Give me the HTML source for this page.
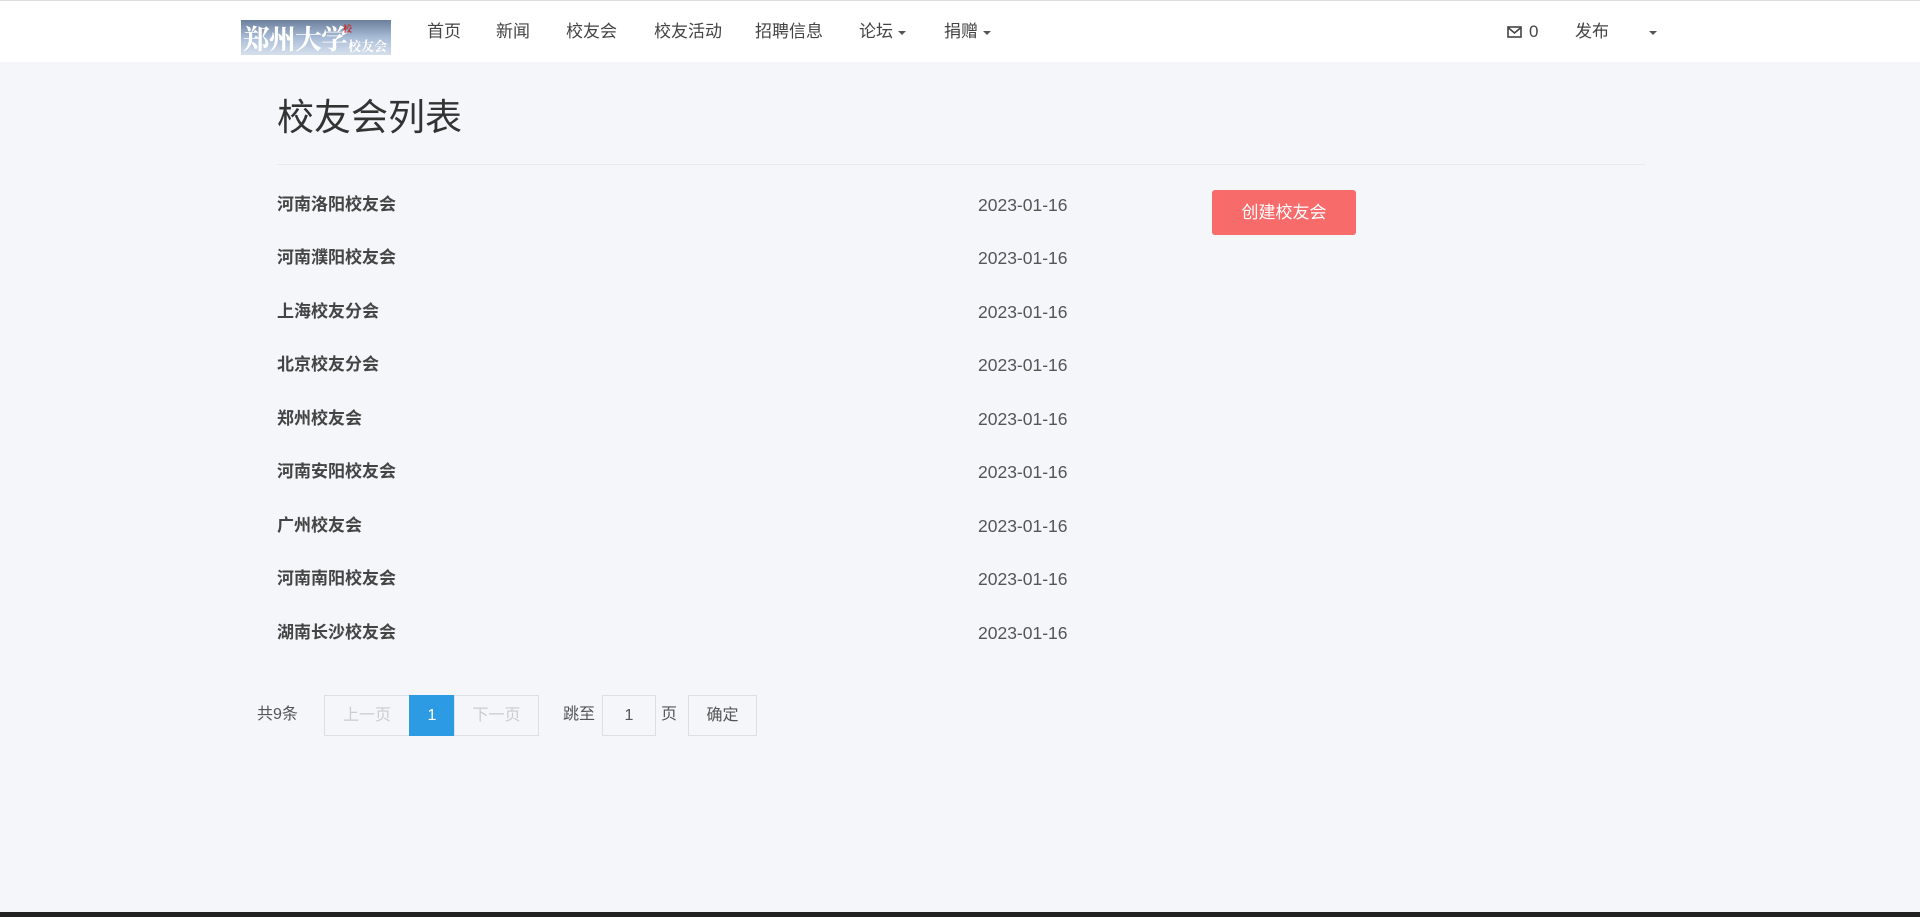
<!DOCTYPE html>
<html><head><meta charset="utf-8"><style>
*{margin:0;padding:0;box-sizing:border-box}
body{width:1920px;height:917px;background:#f4f6f9;font-family:"Liberation Sans","Noto Sans CJK SC",sans-serif;color:#333;position:relative;overflow:hidden}
.nav{position:absolute;left:0;top:0;width:1920px;height:62px;background:#fff;border-top:1px solid #ddd}
.logo{position:absolute;left:241px;top:19px;width:150px;height:35px;background:linear-gradient(180deg,#6b7f9c 0%,#a9bcd6 50%,#d6e0ec 100%);overflow:hidden}
.logo span{position:absolute;font-family:"Noto Serif CJK SC",serif;color:#fff;font-weight:bold}
.n{position:absolute;top:21px;font-size:17px;color:#444;line-height:20px}
.caret{display:inline-block;width:0;height:0;border-left:4px solid transparent;border-right:4px solid transparent;border-top:4px solid #555;vertical-align:middle;margin-left:5px}
h1{position:absolute;left:277px;top:95px;font-size:37px;font-weight:normal;color:#333;line-height:46px}
.hr{position:absolute;left:277px;top:164px;width:1368px;height:1px;background:#e8eaed}
.row{position:absolute;left:277px;font-size:17px;font-weight:bold;color:#444;line-height:20px}
.date{position:absolute;left:978px;font-size:17.5px;color:#555;line-height:20px}
.btn{position:absolute;left:1212px;top:190px;width:144px;height:45px;background:#f86b6b;border-radius:3px;color:#fff;font-size:17px;line-height:45px;text-align:center}
.pg{position:absolute;top:695px;height:41px;line-height:39px;font-size:16px;text-align:center;border:1px solid #dcdfe3;background:#f4f6f9}
.t{position:absolute;top:705px;font-size:16px;color:#555;line-height:20px}
.bot{position:absolute;left:0;top:912px;width:1920px;height:5px;background:#222}
</style></head><body>
<div class="nav">
<div class="logo"><span style="left:2px;top:-2px;font-size:27px;letter-spacing:-1px">郑州大学</span><span style="left:107px;top:16px;font-size:13px">校友会</span><span style="left:102px;top:2px;font-size:9px;color:#c22">校</span></div>
<div class="n" style="left:427px">首页</div>
<div class="n" style="left:496px">新闻</div>
<div class="n" style="left:566px">校友会</div>
<div class="n" style="left:654px">校友活动</div>
<div class="n" style="left:755px">招聘信息</div>
<div class="n" style="left:859px">论坛<i class="caret"></i></div>
<div class="n" style="left:944px">捐赠<i class="caret"></i></div>
<svg style="position:absolute;left:1507px;top:25px" width="15" height="12" viewBox="0 0 15 12"><rect x="1" y="1" width="13" height="10" fill="none" stroke="#444" stroke-width="1.6"/><path d="M1 1.5L7.5 7L14 1.5" fill="none" stroke="#444" stroke-width="1.6"/></svg>
<div class="n" style="left:1529px">0</div>
<div class="n" style="left:1575px">发布</div>
<div class="n" style="left:1644px"><i class="caret"></i></div>
</div>
<h1>校友会列表</h1>
<div class="hr"></div>
<div class="row" style="top:195px">河南洛阳校友会</div><div class="date" style="top:195px">2023-01-16</div>
<div class="row" style="top:248px">河南濮阳校友会</div><div class="date" style="top:248px">2023-01-16</div>
<div class="row" style="top:302px">上海校友分会</div><div class="date" style="top:302px">2023-01-16</div>
<div class="row" style="top:355px">北京校友分会</div><div class="date" style="top:355px">2023-01-16</div>
<div class="row" style="top:409px">郑州校友会</div><div class="date" style="top:409px">2023-01-16</div>
<div class="row" style="top:462px">河南安阳校友会</div><div class="date" style="top:462px">2023-01-16</div>
<div class="row" style="top:516px">广州校友会</div><div class="date" style="top:516px">2023-01-16</div>
<div class="row" style="top:569px">河南南阳校友会</div><div class="date" style="top:569px">2023-01-16</div>
<div class="row" style="top:623px">湖南长沙校友会</div><div class="date" style="top:623px">2023-01-16</div>
<div class="btn">创建校友会</div>
<div class="t" style="left:257px">共9条</div>
<div class="pg" style="left:324px;width:86px;color:#ccc">上一页</div>
<div class="pg" style="left:409px;width:46px;background:#2d9be3;border-color:#2d9be3;color:#fff">1</div>
<div class="pg" style="left:454px;width:85px;color:#ccc">下一页</div>
<div class="t" style="left:563px">跳至</div>
<div class="pg" style="left:602px;width:54px;color:#555">1</div>
<div class="t" style="left:661px">页</div>
<div class="pg" style="left:688px;width:69px;color:#555">确定</div>
<div class="bot"></div>
</body></html>
